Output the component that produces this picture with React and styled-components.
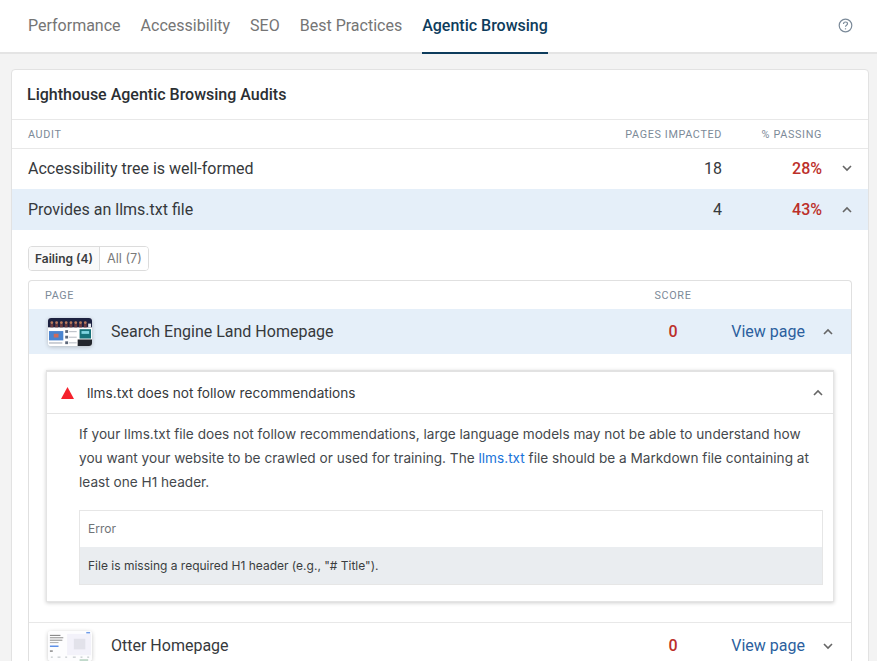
import React from "react";
import styled, { createGlobalStyle } from "styled-components";

const Global = createGlobalStyle`
  html, body { margin: 0; padding: 0; height: 661px; overflow: hidden; background: #f3f3f3; }
  * { box-sizing: border-box; }
  body { font-family: Roboto, "Liberation Sans", sans-serif; -webkit-font-smoothing: antialiased; }
`;

const Page = styled.div`width: 877px; height: 661px; overflow: hidden;`;
const Nav = styled.nav`
  height: 54px; background: #fff; border-bottom: 2px solid #e4e4e4;
  display: flex; justify-content: space-between; padding: 0 24px 0 28px;
`;
const Tabs = styled.div`display: flex; gap: 20px;`;
const Tab = styled.div`
  height: 54px; padding-top: 16px; font-size: 16px; line-height: 20px;
  color: ${p => (p.$active ? "#0d3c5c" : "#757575")};
  font-weight: ${p => (p.$active ? 500 : 400)};
  border-bottom: 2px solid ${p => (p.$active ? "#0d3c5c" : "transparent")};
`;
const HelpBtn = styled.div`padding-top: 18px; color: #7b8a99; line-height: 0;`;

const Main = styled.main`padding: 15px 8px 0 11px;`;
const Card = styled.section`
  background: #fff; border: 1px solid #e2e2e2; border-radius: 4px 4px 0 0; min-height: 600px;
`;
const Title = styled.h2`
  margin: 0; height: 50px; padding: 15px 15px 0; font-size: 16px; line-height: 20px; font-weight: 500; color: #2b2f33;
  border-bottom: 1px solid #e8e8e8;
`;
const auditCols = `grid-template-columns: 1fr 130px 100px 46px;`;
const AuditHead = styled.div`
  display: grid; ${auditCols} height: 29px; align-items: center; padding-left: 16px;
  border-bottom: 1px solid #e8e8e8;
`;
const HeadCell = styled.div`
  font-size: 10.8px; letter-spacing: 0.65px; color: #7c8a98; text-transform: uppercase;
  text-align: ${p => p.$align || "left"};
`;
const AuditRow = styled.div`
  display: grid; ${auditCols} height: ${p => (p.$open ? "41px" : "40px")}; align-items: center; padding-left: 16px;
  padding-bottom: ${p => (p.$open ? "0" : "2px")};
  background: ${p => (p.$open ? "#e5eff9" : "#fff")};
`;
const AuditName = styled.div`font-size: 16px; color: #36393c;`;
const Count = styled.div`font-size: 16px; color: #36393c; text-align: right;`;
const Pct = styled.div`font-size: 16px; font-weight: 500; color: #bc2f2a; text-align: right;`;
const ChevronCell = styled.div`display: flex; justify-content: center; color: #666; line-height: 0;`;
const AuditChevron = styled(ChevronCell)`padding-left: 3px;`;

const Expanded = styled.div`padding: 16px 16px 0;`;
const Segments = styled.div`
  display: inline-flex; vertical-align: top; height: 25px; border: 1px solid #dcdcdc; border-radius: 4px; overflow: hidden;
  font-family: Inter, Roboto, sans-serif; background: #fff;
`;
const Segment = styled.div`
  display: flex; align-items: center; padding: 0 6px 0 ${p => (p.$active ? "6px" : "7px")};
  font-size: ${p => (p.$active ? "12px" : "12.7px")};
  color: ${p => (p.$active ? "#3a3d40" : "#7a7a7a")};
  font-weight: ${p => (p.$active ? 600 : 400)};
  background: ${p => (p.$active ? "#fafafa" : "#fff")};
  & + & { border-left: 1px solid #dcdcdc; }
`;
const Panel = styled.div`
  margin-top: 9px; border: 1px solid #e0e0e0; border-radius: 4px 4px 0 0; border-bottom: none; background: #fff;
`;
const pageCols = `grid-template-columns: 1fr 60px 102px 46px;`;
const PageHead = styled.div`
  display: grid; ${pageCols} height: 28px; align-items: center; padding-left: 16px;
`;
const PageRow = styled.div`
  display: grid; ${pageCols} height: ${p => (p.$open ? "45px" : "46px")}; align-items: center; padding-left: 19px;
  background: ${p => (p.$open ? "#e5eff9" : "#fff")};
  border-top: ${p => (p.$open ? "none" : "1px solid #e8e8e8")};
`;
const PageName = styled.div`display: flex; align-items: center; gap: 19px; font-size: 16px; color: #36393c;`;
const Thumb = styled.svg`
  display: block; width: 44px; height: ${p => p.$h}px; border-radius: 3px; flex: none;
  box-shadow: 0 1px 4px rgba(0, 0, 0, 0.22);
`;
const Score = styled.div`font-size: 16px; font-weight: 500; color: #bc2f2a; text-align: center;`;
const ViewLink = styled.a`font-size: 16px; color: #2c5f9e; text-align: right;`;

const DetailWrap = styled.div`padding: 16px 17px 20px;`;
const Alert = styled.div`
  border: 1px solid #e4e4e4; border-top: 2px solid #e2e2e2; background: #fff;
  box-shadow: 0 1px 4px rgba(0, 0, 0, 0.2);
`;
const AlertHead = styled.div`
  height: 42px; display: flex; align-items: center; padding: 0 9px 0 14px;
  border-bottom: 1px solid #e4e4e4;
`;
const AlertTitle = styled.div`
  flex: 1; margin-left: 13px; font-family: Inter, Roboto, sans-serif; font-size: 13.65px; color: #36393c;
`;
const AlertBody = styled.div`padding: 8px 10px 16px 32px;`;
const Description = styled.p`
  margin: 0; font-family: Inter, Roboto, sans-serif; font-size: 13.64px; line-height: 24px; color: #44484c;
  a { color: #1a73d9; text-decoration: none; }
`;
const ErrorTable = styled.div`margin-top: 16px; border: 1px solid #e6e6e6;`;
const ErrorHead = styled.div`
  height: 36px; padding: 0 8px 2px; display: flex; align-items: center;
  font-family: Inter, Roboto, sans-serif; font-size: 12px; color: #707478;
`;
const ErrorCell = styled.div`
  height: 37px; padding: 0 8px; display: flex; align-items: center; background: #eaedf0;
  font-family: Inter, Roboto, sans-serif; font-size: 12px; color: #3a3d40;
`;

const Chevron = ({ up }) => (
  <svg width="12" height="8" viewBox="0 0 12 8" fill="none" stroke="currentColor" strokeWidth="1.6">
    <path d={up ? "M2 6 6 2l4 4" : "M2 2l4 4 4-4"} />
  </svg>
);

const Help = () => (
  <svg width="15" height="15" viewBox="0 0 15 15" fill="none" stroke="currentColor" strokeWidth="1.2">
    <circle cx="7.5" cy="7.5" r="6.3" />
    <path d="M5.5 5.9c0-1.2 .9-1.9 2-1.9s2 .7 2 1.8c0 1.500-2 1.500-2 3" />
    <path d="M7.5 10.300v1.100" />
  </svg>
);

const SelThumb = () => (
  <Thumb $h={28} viewBox="0 0 46 30" preserveAspectRatio="none">
    <rect width="46" height="30" fill="#fff" />
    <rect width="46" height="10" fill="#1c2140" />
    {[4, 9, 14, 19, 24, 29, 34, 39].map(x => (
      <g key={x}><circle cx={x} cy="5" r="1.500" fill="#b97a5e" /><rect x={x - 1.500} y="6.500" width="3" height="3.500" fill="#6b3a3e" /></g>
    ))}
    <rect x="42" y="6" width="3" height="4" fill="#e4e8ee" />
    <rect x="1" y="14" width="15" height="10" fill="#4a84cf" />
    <path d="M6 17h5v4H6z" fill="#cf6a5a" />
    <rect x="1" y="26" width="14" height="1.500" fill="#b9bec6" />
    <rect x="18" y="13" width="3" height="3" fill="#5c6779" />
    <rect x="22" y="14" width="8" height="1.200" fill="#bcc1c8" />
    <rect x="18" y="19" width="3" height="3" fill="#5c6779" />
    <rect x="22" y="20" width="8" height="1.200" fill="#bcc1c8" />
    <rect x="18" y="25" width="3" height="3" fill="#5c6779" />
    <rect x="22" y="26" width="8" height="1.200" fill="#bcc1c8" />
    <rect x="33" y="12" width="12" height="10" fill="#17727a" />
    <rect x="35" y="14" width="8" height="3" fill="#7fd4e0" />
    <rect x="31" y="23" width="15" height="7" fill="#23262d" />
  </Thumb>
);

const OtterThumb = () => (
  <Thumb $h={30} viewBox="0 0 46 31" preserveAspectRatio="none">
    <rect width="46" height="31" fill="#fdfdfe" />
    <rect x="20" y="3" width="25" height="22" fill="#f3f2fa" />
    <rect x="27" y="8" width="12" height="11" fill="#e2e2ea" />
    <rect x="2" y="4" width="11" height="1" fill="#777" />
    <rect x="2" y="6.500" width="14" height="1" fill="#888" />
    <rect x="2" y="9" width="13" height="1" fill="#888" />
    <rect x="2" y="11.500" width="9" height="1" fill="#aaa" />
    <rect x="2" y="15" width="9" height="1.500" fill="#5b8ee8" />
    <rect x="2" y="20" width="3" height="1.500" fill="#888" />
    <path d="M3 27h2M10 27h3M18 27h2M26 27h3M34 27h2M41 27h2" stroke="#b5bcc0" strokeWidth="1" />
    <rect x="33" y="29.500" width="9" height="1" fill="#8ab79a" />
    <rect x="40" y="1" width="4" height="1.500" fill="#6f9be8" />
  </Thumb>
);

export default function App() {
  return (
    <Page>
      <Global />
      <Nav>
        <Tabs>
          <Tab>Performance</Tab>
          <Tab>Accessibility</Tab>
          <Tab>SEO</Tab>
          <Tab>Best Practices</Tab>
          <Tab $active>Agentic Browsing</Tab>
        </Tabs>
        <HelpBtn><Help /></HelpBtn>
      </Nav>
      <Main>
        <Card>
          <Title>Lighthouse Agentic Browsing Audits</Title>
          <AuditHead>
            <HeadCell>Audit</HeadCell>
            <HeadCell $align="right">Pages impacted</HeadCell>
            <HeadCell $align="right">% Passing</HeadCell>
            <span />
          </AuditHead>
          <AuditRow>
            <AuditName>Accessibility tree is well-formed</AuditName>
            <Count>18</Count>
            <Pct>28%</Pct>
            <AuditChevron><Chevron /></AuditChevron>
          </AuditRow>
          <AuditRow $open>
            <AuditName>Provides an llms.txt file</AuditName>
            <Count>4</Count>
            <Pct>43%</Pct>
            <AuditChevron><Chevron up /></AuditChevron>
          </AuditRow>
          <Expanded>
            <Segments>
              <Segment $active>Failing (4)</Segment>
              <Segment>All (7)</Segment>
            </Segments>
            <Panel>
              <PageHead>
                <HeadCell>Page</HeadCell>
                <HeadCell $align="center">Score</HeadCell>
                <span />
                <span />
              </PageHead>
              <PageRow $open>
                <PageName><SelThumb />Search Engine Land Homepage</PageName>
                <Score>0</Score>
                <ViewLink>View page</ViewLink>
                <ChevronCell><Chevron up /></ChevronCell>
              </PageRow>
              <DetailWrap>
                <Alert>
                  <AlertHead>
                    <svg width="13" height="12" viewBox="0 0 13 12"><path d="M6.5 0 13 12H0z" fill="#f5222d" /></svg>
                    <AlertTitle>llms.txt does not follow recommendations</AlertTitle>
                    <ChevronCell><Chevron up /></ChevronCell>
                  </AlertHead>
                  <AlertBody>
                    <Description>
                      If your llms.txt file does not follow recommendations, large language models may not be able to understand how you want your website to be crawled or used for training. The <a>llms.txt</a> file should be a Markdown file containing at least one H1 header.
                    </Description>
                    <ErrorTable>
                      <ErrorHead>Error</ErrorHead>
                      <ErrorCell>File is missing a required H1 header (e.g., "# Title").</ErrorCell>
                    </ErrorTable>
                  </AlertBody>
                </Alert>
              </DetailWrap>
              <PageRow>
                <PageName><OtterThumb />Otter Homepage</PageName>
                <Score>0</Score>
                <ViewLink>View page</ViewLink>
                <ChevronCell><Chevron /></ChevronCell>
              </PageRow>
            </Panel>
          </Expanded>
        </Card>
      </Main>
    </Page>
  );
}
